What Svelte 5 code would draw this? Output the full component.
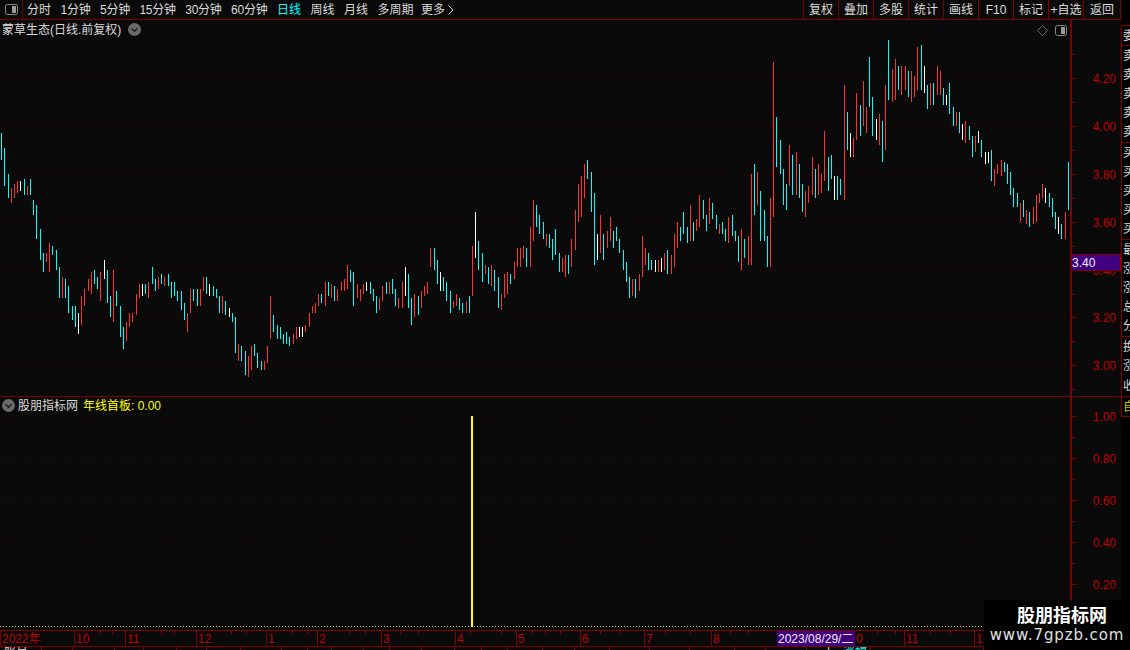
<script>
  // bars are noted per crop of the chart at 3x: x, top, bottom, colour
  const groups = [
    [0, 120, '4 39 120 c,13 84 198 c,25 162 234 c,34 204 249 r,43 192 234 r,52 183 219 r,61 183 213 w,73 177 225 c,82 198 225 r,91 177 225 c,100 240 285 c,109 255 357 c,121 327 420 c,130 399 456 c,139 399 426 r,148 369 456 r,157 378 405 c,169 390 450 c,178 441 534 c,187 471 534 r,196 477 534 c,205 498 579 c,217 558 600 c,226 558 621 c,235 579 642 w,244 528 615 r,253 507 558 r,265 477 513 r,274 456 522 r,283 450 492 c,292 471 507 c,301 456 543 r,313 420 477 w,322 450 549 c,331 528 591 c,340 450 606 r,349 513 558 c,361 558 651 c,370 621 687 c,379 606 663 r,388 579 621 r,397 579 606 r,409 522 585 r,418 492 534 r,427 492 528 w,436 492 522 c,445 486 534 r,457 441 492 c,466 477 513 c,475 471 507 r,484 462 492 c,493 471 498 r,505 462 498 c,514 486 534 c,523 486 528 c,532 513 543 c,544 513 570 c,553 549 600 c,562 579 636 r,571 507 579 r,580 507 543 c,592 507 558 c,601 507 558 r,610 471 513 r,619 471 522 c,628 492 528 w,640 498 528 c,649 507 534 c,658 528 579 c,667 528 579 r,676 543 585 c,688 564 591 w,697 579 606 c,706 591 699 c,715 672 723 r,724 678 723 c,736 693 765 c,745 708 771 r,754 678 750 r,763 672 708 c,772 699 744 c,784 723 750 c,793 723 750 r,802 678 729 r,811 528 657 r,820 585 636 c,832 615 657 c'],
    [280, 150, '1 531 567 c,10 552 582 c,19 546 582 c,28 561 588 c,40 552 582 r,49 531 567 r,58 531 561 w,67 531 561 w,76 525 546 r,88 489 531 r,97 468 489 r,106 459 489 r,115 432 468 r,124 432 459 c,136 396 468 r,145 396 438 c,154 402 444 r,163 408 453 c,172 417 453 r,184 396 423 r,193 387 423 r,202 345 417 r,211 360 396 c,220 366 468 c,232 402 444 r,241 417 453 r,250 402 432 r,259 396 423 w,271 396 432 c,280 417 453 c,289 438 489 c,298 444 480 r,307 408 453 r,319 396 432 c,328 396 432 r,337 387 432 c,346 417 468 c,355 444 474 r,367 396 474 r,376 351 438 w,385 372 474 c,394 444 525 c,403 432 501 r,415 438 495 c,424 423 474 r,433 408 438 r,442 396 432 r,451 294 351 r,463 294 360 c,472 330 402 c,481 366 423 w,490 381 423 c,499 396 453 c,511 423 489 c,520 453 474 r,529 432 468 r,538 444 480 c,547 459 489 c,559 453 489 r,568 438 489 c,577 288 438 r,586 186 324 w,595 273 360 c,607 309 396 c,616 345 372 r,625 351 402 c,634 345 408 r,643 360 423 c,655 381 474 c,664 432 480 r,673 372 444 r,682 366 432 r,691 372 402 c,703 336 387 r,712 294 351 r,721 294 351 r,730 288 324 r,739 294 351 c,751 231 351 r,760 150 273 r,769 165 231 c,778 195 252 c,790 216 267 c,799 252 288 r,808 252 294 c,817 267 330 c,826 237 315 c,838 309 366 c'],
    [560, 50, '7 624 666 r,16 615 681 r,25 615 672 c,34 567 651 r,46 480 600 r,55 402 516 r,64 378 501 r,73 342 444 r,82 330 387 c,94 366 486 c,103 429 645 c,112 552 630 w,121 495 609 r,130 552 630 c,142 543 594 r,151 501 573 r,160 543 594 c,169 531 573 c,178 567 609 c,190 600 660 c,199 636 696 c,208 681 744 c,217 687 738 r,226 687 744 c,238 672 723 r,247 558 681 r,256 594 645 r,265 609 660 c,274 630 660 c,286 630 666 w,295 630 666 r,304 624 666 w,313 609 660 r,322 600 672 c,334 615 672 r,343 552 651 r,352 516 594 r,361 531 573 c,370 486 552 c,382 531 579 c,391 465 573 r,400 516 573 c,409 507 543 r,418 435 531 r,430 450 507 c,439 495 543 c,448 444 522 r,457 459 507 c,469 495 537 c,478 522 552 r,487 516 552 c,496 537 573 c,505 501 579 r,517 495 558 c,526 543 573 c,535 558 636 c,544 537 660 r,553 567 624 c,565 558 645 r,574 372 645 r,583 342 495 c,592 366 465 r,601 423 573 c,613 480 573 c,622 558 651 c,631 444 651 r,640 36 501 r,649 201 351 c,661 270 372 c,670 357 465 c,679 402 480 c,688 285 408 r,697 315 435 c,709 306 435 r,718 342 444 c,727 402 486 c,736 423 501 r,745 408 459 r,757 321 435 r,766 357 444 c,775 342 435 r'],
    [820, 30, '4 432 489 r,13 303 453 r,25 381 483 c,34 375 447 c,43 438 510 w,52 438 510 c,61 447 495 c,73 165 510 r,82 246 360 c,91 309 381 w,100 324 381 r,109 189 330 r,121 225 318 c,130 153 288 r,139 231 309 r,148 81 231 c,157 201 318 c,169 267 330 w,178 252 345 r,187 273 396 c,196 165 360 r,205 30 210 c,217 117 216 r,226 87 210 r,235 108 180 c,244 108 195 r,256 108 180 r,265 123 201 c,274 123 216 r,283 138 201 r,292 51 180 r,304 45 180 c,313 108 189 w,322 165 237 c,331 159 225 r,340 159 225 c,352 108 195 r,361 123 195 r,370 174 225 c,379 195 225 w,388 159 252 c,400 231 288 c,409 246 288 r,418 246 309 c,427 282 330 w,436 273 339 r,448 288 330 c,457 318 381 c,466 318 366 r,475 303 339 w,484 330 381 c,496 366 402 w,505 366 399 w,514 360 453 c,523 417 468 r,532 402 432 r,544 390 438 r,553 396 426 c,562 402 462 c,571 426 495 c,580 474 531 c,592 489 531 c,601 519 576 r,610 510 561 c,619 540 582 r,628 546 591 c,640 531 582 r,649 495 576 r,658 489 519 r,667 462 504 r,676 474 519 w,688 489 531 c,697 504 561 c,706 546 597 c,715 561 612 w,724 582 627 c,736 546 627 r,745 396 540 c']
  ];

  const paths = { r: '', c: '', w: '' };
  for (const [ox, oy, list] of groups) {
    for (const item of list.split(',')) {
      const [zx, top, bot, col] = item.split(' ');
      const x = ox + Math.floor(zx / 3) + 0.5;
      paths[col] += `M${x} ${oy + Math.round(top / 3)}V${oy + Math.round(bot / 3)}`;
    }
  }

  const periods = ['分时', '1分钟', '5分钟', '15分钟', '30分钟', '60分钟', '日线', '周线', '月线', '多周期'];
  const tools = ['复权', '叠加', '多股', '统计', '画线', 'F10', '标记', '+自选', '返回'];

  const priceTicks = [
    { y: 78, label: '4.20' }, { y: 126, label: '4.00' }, { y: 174, label: '3.80' },
    { y: 222, label: '3.60' }, { y: 270, label: '3.40' }, { y: 317, label: '3.20' }, { y: 365, label: '3.00' }
  ];
  const priceMinor = [54, 102, 150, 198, 246, 294, 341, 389];
  const indTicks = [
    { y: 416, label: '1.00' }, { y: 458, label: '0.80' }, { y: 500, label: '0.60' },
    { y: 542, label: '0.40' }, { y: 584, label: '0.20' }
  ];
  const indMinor = [437, 479, 521, 563, 605];

  const months = [
    [0, '2022年'], [74, '10'], [125, '11'], [196, '12'], [266, '1'], [317, '2'], [381, '3'],
    [455, '4'], [516, '5'], [580, '6'], [644, '7'], [711, '8'], [854, '0'], [904, '11'], [974, '12']
  ];
  const dateTicks = [100, 112, 161, 174, 231, 246, 292, 307, 349, 365, 400, 418, 470, 501, 532, 545, 560, 600, 620, 665, 690, 730, 748, 790, 815, 877, 895, 930, 950, 1000, 1040];

  const statusEdges = [0, 42, 73, 115, 144, 177, 207, 241, 282, 308, 332, 364, 390, 422, 455, 482, 508, 543, 575, 610, 650, 690, 735, 766, 807, 838, 871, 984];
  const statusText = { 0: '账号', 807: '上', 838: '涨幅' };

  const sideGroups = [
    { h: 20, chars: ['委'] },
    { h: 97, chars: ['卖', '卖', '卖', '卖', '卖'] },
    { h: 97, chars: ['买', '买', '买', '买', '买'] },
    { h: 97, chars: ['最', '涨', '涨', '总', '分'] },
    { h: 60, chars: ['换', '涨', '收'] }
  ];
</script>

<div class="app">
  <div class="left">
    <div class="toolbar">
      <button class="toggle" aria-label="toggle">
        <svg width="13" height="11" viewBox="0 0 13 11"><rect x="0.5" y="0.5" width="12" height="10" rx="2" fill="none" stroke="#8a8a8a" /><rect x="7" y="2" width="4" height="7" fill="#9a9a9a" /></svg>
      </button>
      <div class="periods">
        {#each periods as p}
          <span class:active={p === '日线'} class:num={/\d/.test(p)}>{p}</span>
        {/each}
        <span class="more">更多 <svg width="6" height="10" viewBox="0 0 6 10"><path d="M0.5 0.5L5 5L0.5 9.5" fill="none" stroke="#ddd" /></svg></span>
      </div>
      <div class="tools">
        {#each tools as t}
          <span>{t}</span>
        {/each}
      </div>
    </div>

    <div class="panel main-panel">
      <div class="title">
        <span>蒙草生态(日线.前复权)</span>
        <svg class="chev" width="13" height="13" viewBox="0 0 13 13"><circle cx="6.5" cy="6.5" r="6.5" fill="#6a6a6a" /><path d="M3.5 5.2L6.5 8.2L9.5 5.2" fill="none" stroke="#1c1c1c" stroke-width="1.4" /></svg>
      </div>
      <div class="corner">
        <svg width="11" height="11" viewBox="0 0 11 11"><path d="M5.5 0.5L10.5 5.5L5.5 10.5L0.5 5.5Z" fill="none" stroke="#666" /></svg>
        <svg width="12" height="11" viewBox="0 0 12 11"><rect x="0.5" y="0.5" width="11" height="10" rx="2" fill="none" stroke="#8a8a8a" /><rect x="6" y="2" width="4" height="7" fill="#9a9a9a" /></svg>
      </div>
      <svg class="chart" width="1121" height="376" viewBox="0 20 1121 376" shape-rendering="crispEdges">
        {#each priceTicks as t}
          <path class="grid" d="M0 {t.y + 0.5}H1070" />
          <path class="tick" d="M1072 {t.y + 0.5}H1077" />
        {/each}
        {#each priceMinor as y}
          <path class="tick" d="M1072 {y + 0.5}H1075" />
        {/each}
        <path d={paths.r} stroke="#ff3232" />
        <path d={paths.c} stroke="#00ffff" />
        <path d={paths.w} stroke="#ffffff" />
        <path class="axis" d="M1071 20V396" />
        {#each priceTicks as t}
          <text class="price" x="1116" y={t.y + 4.5} text-anchor="end">{t.label}</text>
        {/each}
        <rect x="1071.5" y="254.5" width="49" height="16" fill="#400080" stroke="#800000" />
        <text class="last" x="1072" y="266.5">3.40</text>
      </svg>
    </div>

    <div class="panel ind-panel">
      <div class="title ind-title">
        <svg class="chev" width="13" height="13" viewBox="0 0 13 13"><circle cx="6.5" cy="6.5" r="6.5" fill="#6a6a6a" /><path d="M3.5 5.2L6.5 8.2L9.5 5.2" fill="none" stroke="#1c1c1c" stroke-width="1.4" /></svg>
        <span>股朋指标网</span>
        <span class="value">年线首板: 0.00</span>
      </div>
      <svg class="chart" width="1121" height="233" viewBox="0 397 1121 233" shape-rendering="crispEdges">
        {#each indTicks as t}
          <path class="grid faint" d="M0 {t.y + 0.5}H1070" />
          <path class="tick" d="M1072 {t.y + 0.5}H1077" />
          <text class="price" x="1116" y={t.y + 4.5} text-anchor="end">{t.label}</text>
        {/each}
        {#each indMinor as y}
          <path class="tick" d="M1072 {y + 0.5}H1075" />
        {/each}
        <path class="dots" d="M0 626.5H1070" />
        <rect x="471" y="416" width="2" height="211" fill="#ffff00" />
        <path class="axis" d="M1071 397V630" />
      </svg>
    </div>

    <svg class="dates" width="1121" height="15" viewBox="0 631 1121 15" shape-rendering="crispEdges">
      {#each dateTicks as x}
        <path class="tick" d="M{x + 0.5} 631V634" />
      {/each}
      {#each months as [x, label]}
        <path class="tick" d="M{x + 0.5} 631V646" />
        <text class="price" x={x + 2} y="643">{label}</text>
      {/each}
      <rect x="777" y="631" width="78" height="15" fill="#400080" />
      <text class="last" x="778" y="643">2023/08/29/二</text>
    </svg>

    <div class="status">
      {#each statusEdges.slice(0, -1) as x, i}
        <span class="cell" class:first={x === 807} class:cyan={x === 838} style="width: {statusEdges[i + 1] - x}px">{statusText[x] ?? ''}</span>
      {/each}
    </div>
  </div>

  <div class="side">
    {#each sideGroups as g}
      <div class="side-group" style="height: {g.h}px">
        {#each g.chars as c}
          <span>{c}</span>
        {/each}
      </div>
    {/each}
    <div class="side-group self"><span>自</span></div>
  </div>

  <div class="mark">
    <strong>股朋指标网</strong>
    <span>www.7gpzb.com</span>
  </div>
</div>

<style>
  :global(body) {
    margin: 0;
    background: #0a0a0a;
  }
  .app {
    position: relative;
    width: 1130px;
    height: 650px;
    display: flex;
    overflow: hidden;
    background: #0a0a0a;
    color: #dcdcdc;
    font: 12px/1 "Liberation Sans", "Noto Sans CJK SC", sans-serif;
  }
  .left {
    width: 1121px;
    display: flex;
    flex-direction: column;
  }
  .toolbar {
    height: 19px;
    flex: none;
    display: flex;
    align-items: stretch;
    border-bottom: 1px solid #800000;
  }
  .toggle {
    width: 23px;
    padding: 0;
    border: 0;
    border-right: 1px solid #800000;
    background: none;
    display: flex;
    align-items: center;
    justify-content: center;
  }
  .periods {
    flex: 1;
    display: flex;
    align-items: center;
    gap: 9.5px;
    padding-left: 4px;
  }
  .periods .active {
    color: #00ffff;
  }
  .periods .num {
    letter-spacing: -0.25px;
  }
  .more {
    display: flex;
    align-items: center;
    gap: 3px;
    margin-left: -2px;
  }
  .tools {
    display: flex;
    border-left: 1px solid #800000;
  }
  .tools span {
    width: 34px;
    display: flex;
    align-items: center;
    justify-content: center;
    border-right: 1px solid #800000;
  }
  .tools span:last-child {
    width: 36px;
  }
  .panel {
    position: relative;
    flex: none;
  }
  .main-panel {
    height: 376px;
  }
  .ind-panel {
    height: 233px;
    border-top: 1px solid #800000;
  }
  .chart {
    display: block;
  }
  .title {
    position: absolute;
    left: 2px;
    top: 3px;
    height: 13px;
    display: flex;
    align-items: center;
    gap: 7px;
    font-size: 12px;
    white-space: nowrap;
  }
  .ind-title {
    top: 2px;
    left: 2px;
    gap: 3px;
  }
  .ind-title .value {
    margin-left: 2px;
    color: #ffff00;
  }
  .chev {
    flex: none;
  }
  .corner {
    position: absolute;
    top: 5px;
    left: 1037px;
    display: flex;
    gap: 7px;
  }
  .grid {
    stroke: #5a0000;
    stroke-dasharray: 1 4;
  }
  .faint {
    stroke: #3a0000;
  }
  .tick {
    stroke: #800000;
    fill: none;
  }
  .axis {
    stroke: #800000;
    stroke-width: 2;
  }
  .dots {
    stroke: #c8c800;
    stroke-dasharray: 1 2;
  }
  .price {
    fill: #c00000;
    font-size: 12px;
  }
  .last {
    fill: #f0f0f0;
    font-size: 12px;
  }
  .dates {
    display: block;
    flex: none;
    border-top: 1px solid #800000;
    border-bottom: 1px solid #800000;
  }
  .status {
    height: 3px;
    display: flex;
    overflow: hidden;
    font-size: 12px;
    line-height: 12px;
  }
  .cell {
    flex: none;
    box-sizing: border-box;
    padding-left: 4px;
    border-right: 1px solid #800000;
    white-space: nowrap;
  }
  .first {
    padding-left: 16px;
    border-right: 0;
  }
  .cyan {
    color: #00ffff;
    padding-left: 5px;
  }
  .side {
    width: 9px;
    padding-top: 25px;
    overflow: hidden;
    background: #000;
  }
  .side-group {
    box-sizing: border-box;
    width: 9px;
    overflow: hidden;
    display: flex;
    flex-direction: column;
    justify-content: space-around;
    border-top: 1px solid #800000;
    border-left: 1px solid #800000;
    line-height: 12px;
  }
  .side-group span {
    display: block;
    width: 12px;
    margin-left: 1px;
  }
  .self {
    height: 21px;
    color: #c8c800;
    border-bottom: 1px solid #800000;
  }
  .mark {
    position: absolute;
    left: 984px;
    top: 600px;
    width: 146px;
    height: 50px;
    background: #000;
    display: flex;
    flex-direction: column;
    align-items: center;
    padding-top: 6px;
    box-sizing: border-box;
    gap: 1px;
  }
  .mark strong {
    color: #fff;
    font-size: 18px;
    line-height: 20px;
    font-weight: 700;
    padding-left: 10px;
  }
  .mark span {
    color: #e0e0e0;
    font: 15px/16px "DejaVu Sans", sans-serif;
    letter-spacing: 0.9px;
    white-space: nowrap;
  }
</style>
